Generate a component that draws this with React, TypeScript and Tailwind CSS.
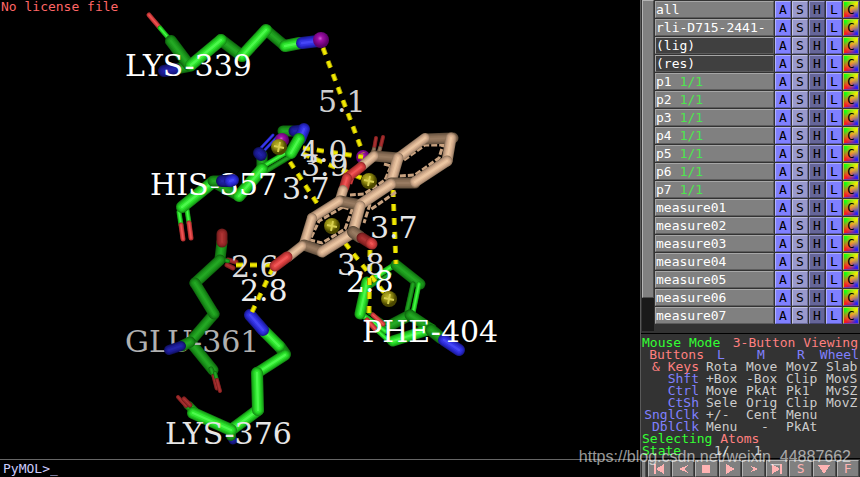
import clsx from "clsx";

type Tone = "green" | "forest" | "blue" | "navy" | "red" | "maroon" | "tan" | "brown";

// [x1, y1, x2, y2, width, tone]
type Bond = [number, number, number, number, number, Tone];

// edge to shine
const tones: Record<Tone, string[]> = {
  green: ["#158a15", "#1cb01c", "#23cc23", "#2ee62e", "#4cf84c"],
  forest: ["#0f660f", "#147c14", "#198e19", "#1e9c1e", "#24a824"],
  blue: ["#1a1a90", "#2222b4", "#2a2ad0", "#3434e4", "#4646f6"],
  navy: ["#10105c", "#151578", "#1a1a8c", "#1e1e9a", "#2424a8"],
  red: ["#982828", "#b43434", "#cc3c3c", "#e04444", "#f05858"],
  maroon: ["#6a1a1a", "#822222", "#942828", "#a02c2c", "#ac3434"],
  tan: ["#92765c", "#b3937a", "#cba587", "#dcb593", "#eac5a2"],
  brown: ["#5e4c3a", "#725c48", "#826852", "#8e7259", "#987b62"],
};

const layers = [1, 0.85, 0.65, 0.45, 0.2];

const lys339: Bond[] = [
  [149, 15, 160, 28, 5, "red"],
  [160, 28, 171, 41, 5, "green"],
  [191, 66, 175, 69, 11, "forest"],
  [175, 69, 164, 71, 12, "navy"],
  [171, 41, 189, 65, 12, "forest"],
  [285, 46, 266, 30, 11, "forest"],
  [221, 40, 242, 56, 12, "forest"],
  [191, 65, 221, 40, 12, "green"],
  [242, 56, 266, 30, 12, "green"],
  [285, 46, 300, 43, 12, "green"],
  [302, 43, 318, 41, 12, "blue"],
];

const his357: Bond[] = [
  [292, 131, 283, 131, 11, "forest"],
  [303, 130, 294, 131, 11, "navy"],
  [278, 136, 262, 153, 3, "blue"],
  [273, 135, 259, 150, 3, "blue"],
  [262, 155, 262, 167, 11, "forest"],
  [259, 153, 261, 155, 12, "navy"],
  [262, 167, 289, 151, 5, "green"],
  [266, 171, 291, 156, 5, "forest"],
  [300, 139, 304, 129, 12, "blue"],
  [291, 153, 299, 139, 12, "green"],
  [213, 182, 239, 196, 11, "forest"],
  [239, 196, 262, 169, 12, "green"],
  [179, 212, 181, 225, 5, "green"],
  [181, 225, 183, 239, 5, "red"],
  [187, 210, 189, 223, 5, "green"],
  [189, 223, 191, 238, 5, "red"],
  [182, 207, 213, 182, 12, "green"],
];

const hisNitrogen: Bond[] = [
  [213, 181, 221, 181, 11, "forest"],
  [222, 181, 230, 181, 12, "navy"],
  [230, 181, 233, 180, 12, "blue"],
];

const glu361: Bond[] = [
  [222, 242, 220, 259, 11, "forest"],
  [222, 234, 222, 242, 11, "maroon"],
  [228, 260, 236, 262, 5, "maroon"],
  [227, 265, 233, 268, 5, "maroon"],
  [220, 259, 228, 261, 4, "forest"],
  [220, 260, 195, 283, 11, "forest"],
  [214, 314, 190, 342, 11, "forest"],
  [195, 283, 214, 314, 11, "forest"],
  [192, 344, 213, 370, 11, "forest"],
  [211, 369, 214, 376, 5, "forest"],
  [214, 376, 217, 388, 5, "maroon"],
  [215, 373, 217, 380, 4, "forest"],
  [217, 380, 220, 391, 4, "maroon"],
];

const gluNitrogen: Bond[] = [
  [190, 342, 182, 346, 11, "forest"],
  [181, 346, 169, 350, 10, "navy"],
];

const lys376: Bond[] = [
  [231, 436, 233, 440, 9, "navy"],
  [231, 430, 231, 436, 10, "forest"],
  [194, 413, 186, 406, 5, "forest"],
  [186, 406, 178, 397, 4, "maroon"],
  [196, 410, 190, 404, 5, "forest"],
  [190, 405, 184, 399, 5, "maroon"],
  [280, 347, 285, 354, 12, "forest"],
  [285, 355, 257, 373, 11, "green"],
  [265, 332, 279, 346, 12, "green"],
  [250, 315, 263, 330, 12, "blue"],
  [258, 410, 231, 430, 12, "green"],
  [257, 373, 258, 410, 12, "green"],
  [193, 413, 231, 430, 12, "green"],
];

const phe404: Bond[] = [
  [369, 281, 396, 264, 6, "green"],
  [371, 286, 390, 274, 4, "forest"],
  [396, 265, 420, 284, 11, "forest"],
  [419, 284, 413, 313, 5, "green"],
  [413, 284, 407, 311, 5, "forest"],
  [410, 315, 385, 328, 11, "forest"],
  [361, 314, 385, 331, 6, "green"],
  [367, 311, 386, 324, 4, "forest"],
  [367, 282, 360, 314, 11, "green"],
  [410, 315, 431, 329, 11, "forest"],
  [373, 315, 383, 324, 5, "red"],
  [367, 320, 376, 330, 5, "red"],
  [378, 331, 391, 343, 5, "green"],
  [393, 341, 431, 329, 11, "green"],
  [431, 330, 441, 338, 12, "forest"],
  [444, 340, 459, 350, 12, "blue"],
];

const ligand: Bond[] = [
  [376, 138, 374, 149, 4, "maroon"],
  [383, 137, 380, 149, 4, "maroon"],
  [374, 149, 372, 155, 4, "brown"],
  [380, 148, 378, 155, 4, "brown"],
  [425, 139, 453, 138, 11, "brown"],
  [374, 156, 398, 158, 11, "brown"],
  [398, 158, 425, 138, 10, "tan"],
  [451, 138, 447, 161, 11, "tan"],
  [398, 158, 391, 182, 11, "tan"],
  [391, 183, 415, 183, 11, "brown"],
  [447, 161, 415, 182, 11, "tan"],
  [374, 156, 362, 166, 10, "tan"],
  [361, 167, 348, 177, 10, "red"],
  [347, 178, 344, 188, 10, "red"],
  [343, 190, 340, 200, 10, "tan"],
  [340, 201, 360, 205, 11, "brown"],
  [391, 184, 361, 204, 11, "tan"],
  [339, 201, 312, 218, 10, "tan"],
  [312, 218, 304, 244, 10, "tan"],
  [360, 206, 353, 232, 11, "tan"],
  [304, 245, 321, 251, 11, "brown"],
  [354, 232, 322, 252, 11, "tan"],
  [353, 232, 360, 237, 12, "brown"],
  [362, 238, 370, 243, 11, "maroon"],
  [371, 243, 372, 244, 11, "red"],
  [302, 246, 288, 257, 10, "tan"],
  [287, 257, 275, 266, 11, "red"],
];

const innerRings = [
  "M404 160 L425 145 L443 145 L439 158 L415 175 L398 176",
  "M384 164 L391 166 L385 180 L364 194 L350 195",
  "M343 207 L319 221 L310 240 L322 243 L345 229 L352 210 Z",
  "M370 204 L364 223",
  "M396 192 L370 210",
];

const distances: [number, number, number, number][] = [
  [323, 48, 363, 153],
  [303, 148, 363, 157],
  [303, 154, 369, 181],
  [290, 162, 332, 226],
  [345, 243, 386, 295],
  [393, 190, 396, 264],
  [236, 265, 272, 265],
  [273, 268, 252, 312],
  [370, 250, 369, 313],
];

const residueLabels: [string, number, number, string][] = [
  ["LYS-339", 125, 76, "#ffffff"],
  ["HIS-357", 150, 195, "#ffffff"],
  ["GLU-361", 125, 352, "#b0b0b0"],
  ["LYS-376", 165, 444, "#e6e6e6"],
];

const distanceLabels: [string, number, number, string][] = [
  ["5.1", 318, 112, "#cfcfcf"],
  ["4.0", 300, 162, "#dcdcdc"],
  ["3.9", 301, 176, "#dcdcdc"],
  ["3.7", 282, 199, "#e6e6e6"],
  ["3.7", 370, 238, "#e6e6e6"],
  ["3.8", 337, 275, "#e0e0e0"],
  ["2.8", 346, 292, "#ffffff"],
  ["2.6", 231, 277, "#dcdcdc"],
  ["2.8", 240, 301, "#eeeeee"],
];

const Sticks = ({ bonds }: { bonds: Bond[] }) => (
  <>
    {bonds.map(([x1, y1, x2, y2, width, tone], i) => (
      <g key={i} strokeLinecap="round">
        {layers.map((part, layer) => (
          <line
            key={part}
            x1={x1}
            y1={y1}
            x2={x2}
            y2={y2}
            stroke={tones[tone][layer]}
            strokeWidth={width * part}
          />
        ))}
      </g>
    ))}
  </>
);

const Centroid = ({ x, y }: { x: number; y: number }) => (
  <g>
    <circle cx={x} cy={y} r="8" fill="url(#olive)" />
    <path
      d={`M${x - 5} ${y - 1}L${x + 5} ${y + 1}M${x + 1} ${y - 5}L${x - 1} ${y + 5}`}
      stroke="#d8d050"
      strokeWidth="2"
    />
  </g>
);

const Labels = ({ items }: { items: [string, number, number, string][] }) => (
  <g fontFamily="'DejaVu Serif', serif" fontSize="30">
    {items.map(([text, x, y, fill], i) => (
      <text key={i} x={x} y={y} fill={fill}>
        {text}
      </text>
    ))}
  </g>
);

const Molecule = () => (
  <svg
    viewBox="0 0 640 459"
    preserveAspectRatio="xMidYMid meet"
    className="block h-full w-full"
    role="img"
    aria-label="Ligand in binding pocket"
  >
    <defs>
      <radialGradient id="olive" cx="0.4" cy="0.35">
        <stop offset="0" stopColor="#bdb52a" />
        <stop offset="0.6" stopColor="#8c8610" />
        <stop offset="1" stopColor="#4c4800" />
      </radialGradient>
      <radialGradient id="purple" cx="0.45" cy="0.4">
        <stop offset="0" stopColor="#d060d0" />
        <stop offset="0.3" stopColor="#a010a8" />
        <stop offset="1" stopColor="#5c0068" />
      </radialGradient>
    </defs>
    <Sticks bonds={lys339} />
    <Sticks bonds={his357} />
    <Sticks bonds={glu361} />
    <Sticks bonds={lys376} />
    <Sticks bonds={phe404} />
    <circle cx="321" cy="40" r="8" fill="url(#purple)" />
    <circle cx="282" cy="140" r="7" fill="url(#purple)" />
    <circle cx="363" cy="157" r="7" fill="url(#purple)" />
    <Labels items={residueLabels} />
    <Sticks bonds={hisNitrogen} />
    <Sticks bonds={gluNitrogen} />
    {distances.map(([x1, y1, x2, y2], i) => (
      <g key={i} strokeDasharray="7 7">
        <line x1={x1} y1={y1} x2={x2} y2={y2} stroke="#a8a000" strokeWidth="5" />
        <line x1={x1} y1={y1} x2={x2} y2={y2} stroke="#f0e800" strokeWidth="3" />
      </g>
    ))}
    <Labels items={distanceLabels} />
    {innerRings.map((d) => (
      <path key={d} d={d} fill="none" stroke="#c8a280" strokeWidth="3" strokeDasharray="6 2" />
    ))}
    <path d="M370 163 L354 174 L350 186" fill="none" stroke="#c83838" strokeWidth="3" strokeDasharray="6 2" />
    <Sticks bonds={ligand} />
    <Centroid x={279} y={147} />
    <Centroid x={369} y={181} />
    <Centroid x={332} y={226} />
    <Centroid x={389} y={299} />
    <Labels items={[["PHE-404", 362, 342, "#ffffff"]]} />
  </svg>
);

const objects: { name: string; state?: string; off?: boolean }[] = [
  { name: "all" },
  { name: "rli-D715-2441-" },
  { name: "(lig)", off: true },
  { name: "(res)", off: true },
  ...[1, 2, 3, 4, 5, 6, 7].map((n) => ({ name: `p${n}`, state: "1/1" })),
  ...[1, 2, 3, 4, 5, 6, 7].map((n) => ({ name: `measure0${n}` })),
];

const menus = [
  { key: "A", title: "Action", style: "bg-[#8080ff] border-t-[#b3b3ff] border-l-[#b3b3ff] border-b-[#5c5cb8] border-r-[#5c5cb8]" },
  { key: "S", title: "Show", style: "bg-[#9999cc] border-t-[#c4c4e8] border-l-[#c4c4e8] border-b-[#6a6a99] border-r-[#6a6a99]" },
  { key: "H", title: "Hide", style: "bg-[#666699] border-t-[#9999cc] border-l-[#9999cc] border-b-[#44446c] border-r-[#44446c]" },
  { key: "L", title: "Label", style: "bg-[#8080ff] border-t-[#b3b3ff] border-l-[#b3b3ff] border-b-[#5c5cb8] border-r-[#5c5cb8]" },
  {
    key: "C",
    title: "Color",
    style:
      "bg-[radial-gradient(circle,#f09030_0%,#f0903000_75%),conic-gradient(from_45deg,#f0f000,#2020ff_25%,#ff1818_50%,#10ff10_75%,#f0f000)] border-t-[#b8e040] border-l-[#c8c040] border-b-[#7040a0] border-r-[#7060a0]",
  },
];

const ObjectList = () => (
  <div className="flex px-px">
    <div className="h-[331px] w-3 shrink-0 bg-[#1a1a1a]">
      <div className="h-[298px] w-full border border-t-[#b3b3b3] border-r-[#4d4d4d] border-b-[#4d4d4d] border-l-[#b3b3b3] bg-[#808080]" />
    </div>
    <ul className="min-w-0 flex-1 pl-px">
      {objects.map(({ name, state, off }) => (
        <li key={name} className="flex h-[18px] gap-px pt-px">
          <button
            className={clsx(
              "min-w-0 flex-1 truncate border border-t-[#a6a6a6] border-r-[#5c5c5c] border-b-[#5c5c5c] border-l-[#a6a6a6] text-left leading-[15px] text-white",
              off ? "bg-[#404040]" : "bg-[#808080]",
            )}
          >
            {name}
            {state && <span className="pl-2 text-[#4de64d]">{state}</span>}
          </button>
          {menus.map((menu) => (
            <button
              key={menu.key}
              aria-label={`${menu.title} ${name}`}
              className={clsx("w-4 shrink-0 border text-center leading-[15px] text-black", menu.style)}
            >
              {menu.key}
            </button>
          ))}
        </li>
      ))}
    </ul>
  </div>
);

const mouseRows = [
  ["Shft", "+Box", "-Box", "Clip", "MovS"],
  ["Ctrl", "Move", "PkAt", "Pk1", "MvSZ"],
  ["CtSh", "Sele", "Orig", "Clip", "MovZ"],
  ["SnglClk", "+/-", "Cent", "Menu", ""],
  ["DblClk", "Menu", "-", "PkAt", ""],
];

const MousePanel = () => (
  <div className="flex-1 border-t border-black px-px pt-[3px] leading-3 text-[#cccccc]">
    <div className="flex justify-between pr-px">
      <span className="text-[#33ff33]">Mouse Mode</span>
      <span className="text-[#ff8080]">3-Button Viewing</span>
    </div>
    <table className="w-full table-fixed border-collapse text-left whitespace-nowrap">
      <thead>
        <tr className="h-3 text-[#8080ff]">
          <th className="w-[63px] p-0 pr-px text-right font-normal text-[#ff8080]">Buttons</th>
          <th className="w-10 p-0 pl-3 font-normal">L</th>
          <th className="w-10 p-0 pl-3 font-normal">M</th>
          <th className="p-0 pl-3 font-normal">R</th>
          <th className="w-10 p-0 text-right font-normal">Wheel</th>
        </tr>
      </thead>
      <tbody>
        <tr className="h-3">
          <th className="p-0 pr-[6px] text-right font-normal text-[#ff8080]">&amp;&thinsp;Keys</th>
          <td className="p-0 pl-px">Rota</td>
          <td className="p-0 pl-px">Move</td>
          <td className="p-0 pl-px">MovZ</td>
          <td className="p-0 pl-[7px]">Slab</td>
        </tr>
        {mouseRows.map(([key, left, middle, right, wheel]) => (
          <tr key={key} className="h-3">
            <th className="p-0 pr-[6px] text-right font-normal text-[#8080ff]">{key}</th>
            <td className="p-0 pl-px">{left}</td>
            <td className={clsx("p-0", middle === "-" ? "pl-4" : "pl-px")}>{middle}</td>
            <td className="p-0 pl-px">{right}</td>
            <td className="p-0 pl-[7px]">{wheel}</td>
          </tr>
        ))}
      </tbody>
    </table>
    <div className="text-[#33ff33]">
      Selecting <span className="text-[#ff8080]">Atoms</span>
    </div>
    <div className="flex">
      <span className="w-[72px] text-[#33ff33]">State</span>
      <span className="w-10">1/</span>
      <span>1</span>
    </div>
  </div>
);

const playback = [
  { label: "Rewind", path: "M2 1H4V11H2ZM12 1V11L4 6Z" },
  { label: "Back", path: "M12 2L3 6L12 10L8 6Z" },
  { label: "Stop", path: "M3 2H11V10H3Z" },
  { label: "Play", path: "M3 1V11L12 6Z" },
  { label: "Forward", path: "M2 2L11 6L2 10L6 6Z" },
  { label: "End", path: "M2 1V11L10 6ZM10 1H12V11H10Z" },
  { label: "Scene", text: "S" },
  { label: "Rock", path: "M1 2H13L7 11Z" },
  { label: "Fullscreen", text: "F" },
];

const Playback = () => (
  <div className="flex h-[19px] border-t border-black pt-px pl-px">
    <div className="mr-0.5 w-1 shrink-0 border-r border-[#4d4d4d] bg-[#808080]" />
    {playback.map(({ label, path, text }) => (
      <button
        key={label}
        aria-label={label}
        className="mr-px flex flex-1 items-center justify-center border border-t-[#b3b3b3] border-r-[#4d4d4d] border-b-[#4d4d4d] border-l-[#b3b3b3] bg-[#808080] leading-3 text-[#ffb3b3]"
      >
        {path ? (
          <svg viewBox="0 0 14 12" className="h-3 w-[14px]" fill="#ffb3b3" shapeRendering="crispEdges">
            <path d={path} />
          </svg>
        ) : (
          text
        )}
      </button>
    ))}
  </div>
);

const App = () => {
  return (
    <div className="relative flex min-h-screen bg-black font-['DejaVu_Sans_Mono',monospace] text-[13px]">
      {/* Viewport */}
      <main className="flex min-w-0 flex-1 flex-col">
        <div className="relative min-h-0 flex-1">
          <Molecule />
          <p className="absolute top-0 left-px leading-[14px] text-[#ff6666]">No license file</p>
        </div>
        <div className="flex h-[18px] items-center border-t border-[#666666] pl-[3px] text-[#ccccff]">
          <label htmlFor="command">PyMOL&gt;</label>
          <input
            id="command"
            defaultValue="_"
            className="min-w-0 flex-1 bg-transparent leading-4 outline-none"
          />
        </div>
      </main>

      {/* Control panel */}
      <aside className="flex w-[220px] shrink-0 flex-col border-l border-[#595959] bg-[#333333]">
        <ObjectList />
        <div className="h-0.5" />
        <MousePanel />
        <Playback />
      </aside>

      <span className="pointer-events-none absolute right-[9px] bottom-2 font-['Liberation_Sans',sans-serif] text-base text-white/60">
        https://blog.csdn.net/weixin_44887662
      </span>
    </div>
  );
};

export default App;
